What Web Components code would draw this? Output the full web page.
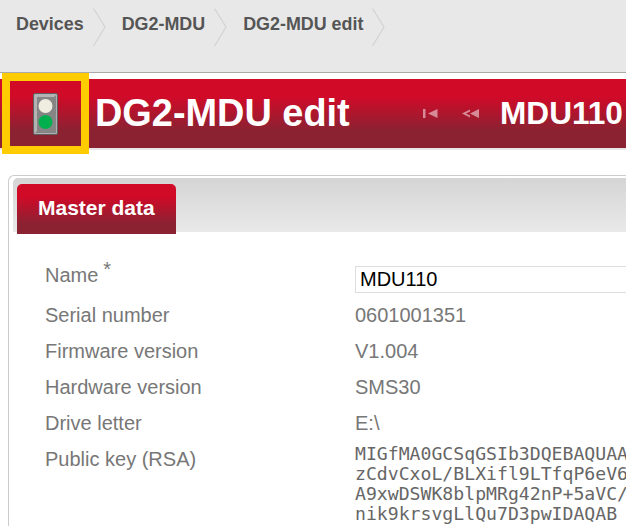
<!DOCTYPE html>
<html>
<head>
<meta charset="utf-8">
<title>DG2-MDU edit</title>
<style>
    html, body { margin: 0; height: 526px; overflow: hidden; background: #fff; font-family: "Liberation Sans", Arial, sans-serif; }
</style>
</head>
<body>
<app-breadcrumb>
    <crumb-item>Devices</crumb-item>
    <crumb-item>DG2-MDU</crumb-item>
    <crumb-item>DG2-MDU edit</crumb-item>
</app-breadcrumb>
<page-banner heading="DG2-MDU edit" device="MDU110"></page-banner>
<tab-panel label="Master data">
    <form-row label="Name" required><name-input value="MDU110"></name-input></form-row>
    <form-row label="Serial number">0601001351</form-row>
    <form-row label="Firmware version">V1.004</form-row>
    <form-row label="Hardware version">SMS30</form-row>
    <form-row label="Drive letter">E:\</form-row>
    <form-row label="Public key (RSA)"><key-block>MIGfMA0GCSqGSIb3DQEBAQUAA
zCdvCxoL/BLXifl9LTfqP6eV6
A9xwDSWK8blpMRg42nP+5aVC/
nik9krsvgLlQu7D3pwIDAQAB</key-block></form-row>
</tab-panel>

<script>
class AppBreadcrumb extends HTMLElement {
    constructor () {
        super()
        this.attachShadow({mode: "open"}).innerHTML = `
        <style>
            :host { display: flex; height: 72px; padding-left: 16px; box-sizing: content-box;
                    background: #e8e8e8; border-bottom: 1px solid #aaa; }
        </style>
        <slot></slot>`
    }
}

class CrumbItem extends HTMLElement {
    constructor () {
        super()
        this.attachShadow({mode: "open"}).innerHTML = `
        <style>
            :host { display: flex; height: 48px; align-items: flex-start; font-size: 17.9px; font-weight: bold;
                    color: #555; white-space: nowrap; }
            span { padding-top: 14px; line-height: 20px; }
            svg { margin: 8px 16px 0 9px; flex: none; }
        </style>
        <span><slot></slot></span>
        <svg width="13" height="39" viewBox="0 0 13 39"><path d="M0.5 0.5 L12 19 L0.5 38" fill="none" stroke="#d2d2d2" stroke-width="1.2"/></svg>`
    }
}

class PageBanner extends HTMLElement {
    constructor () {
        super()
        this.attachShadow({mode: "open"}).innerHTML = `
        <style>
            :host { display: block; position: relative; margin-top: 6px; height: 69px;
                    border-bottom: 2px solid #e8e8e8; }
            .bar { display: flex; align-items: center; height: 69px; padding-left: 95px; width: 700px;
                   background: linear-gradient(#d10a28 0, #d10a28 25%, #8a2232 75%, #8a2232 100%);
                   color: #fff; font-weight: bold; white-space: nowrap; }
            h1 { margin: 0; font-size: 37.9px; line-height: 69px; width: 328px; flex: none; }
            .nav { flex: none; margin-top: -1px; opacity: .5; }
            .nav + .nav { margin-left: 24px; }
            .device { font-size: 31.6px; margin-left: 20px; margin-top: -1px; }
            .mark { position: absolute; left: 2px; top: -6px; width: 87px; height: 81px; box-sizing: border-box;
                    border: 8px solid #fc0; display: flex; align-items: center; justify-content: center; }
            .mark svg { margin: 0 1px 0 0; }
        </style>
        <div class="bar">
            <h1 id="heading"></h1>
            <svg class="nav" width="15" height="9" viewBox="0 0 15 9"><path d="M0 0h2.5v9H0z M5 4.5 L14.5 0 V9z" fill="#fff"/></svg>
            <svg class="nav" width="18" height="9" viewBox="0 0 18 9"><path d="M0 4.5 L8 0.5 V2.5 L4 4.5 L8 6.5 V8.5z M8 4.5 L17 0 V9z" fill="#fff"/></svg>
            <span class="device" id="device"></span>
        </div>
        <div class="mark">
            <svg width="25" height="42" viewBox="0 0 25 42">
                <rect x="0.5" y="0.5" width="24" height="41" rx="1.5" fill="#b0b0b0" stroke="#5f5f5f"/>
                <path d="M2 2H23V40H2z" fill="#858585"/>
                <path d="M2 2H23L21 4H4V38L2 40z" fill="#b4b4b4"/>
                <circle cx="12.5" cy="13" r="7" fill="#efece0"/>
                <circle cx="12.5" cy="29" r="7" fill="#00b04f"/>
            </svg>
        </div>`
    }

    connectedCallback () {
        this.shadowRoot.getElementById("heading").textContent = this.getAttribute("heading")
        this.shadowRoot.getElementById("device").textContent = this.getAttribute("device")
    }
}

class TabPanel extends HTMLElement {
    constructor () {
        super()
        this.attachShadow({mode: "open"}).innerHTML = `
        <style>
            :host { display: block; margin: 25px 0 0 8px; width: 640px; height: 360px; box-sizing: border-box;
                    border: 1px solid #ccc; border-right: 0; border-bottom: 0; border-radius: 6px 0 0 0; padding: 2px 0 0 4px; }
            .strip { height: 54px; padding-left: 4px; border-radius: 5px 0 0 0; position: relative;
                     background: linear-gradient(#d5d5d5, #e9e9e9); }
            .tab { position: relative; top: 6px; width: 159px; height: 50px; box-sizing: border-box; padding-left: 21px;
                   border-radius: 5px 5px 0 0; color: #fff; font-size: 21px; font-weight: bold; line-height: 48px;
                   background: linear-gradient(#d10a28 0, #d10a28 25%, #8a2232 80%, #8a2232 100%); }
            .body { padding: 31px 0 0 32px; }
        </style>
        <div class="strip"><div class="tab" id="label"></div></div>
        <div class="body"><slot></slot></div>`
    }

    connectedCallback () {
        this.shadowRoot.getElementById("label").textContent = this.getAttribute("label")
    }
}

class FormRow extends HTMLElement {
    constructor () {
        super()
        this.attachShadow({mode: "open"}).innerHTML = `
        <style>
            :host { display: grid; grid-template-columns: 310px 1fr; min-height: 36px; font-size: 20px;
                    line-height: 24px; color: #777; white-space: nowrap; }
            sup { font-size: 20px; line-height: 0; margin-left: 5px; vertical-align: 6px; }
        </style>
        <div><span id="label"></span><sup id="req" hidden>*</sup></div>
        <div><slot></slot></div>`
    }

    connectedCallback () {
        this.shadowRoot.getElementById("label").textContent = this.getAttribute("label")
        this.shadowRoot.getElementById("req").hidden = !this.hasAttribute("required")
    }
}

class NameInput extends HTMLElement {
    constructor () {
        super()
        this.attachShadow({mode: "open"}).innerHTML = `
        <style>
            :host { display: block; margin: 3px 0 10px; }
            input { display: block; width: 100%; height: 27px; box-sizing: border-box; margin: 0; padding: 0 4px; outline: 0;
                    border: 1px solid #ddd; color: #000; background: #fff; font: 20px "Liberation Sans", Arial, sans-serif; }
        </style>
        <input id="field">`
    }

    connectedCallback () {
        this.shadowRoot.getElementById("field").value = this.getAttribute("value")
    }
}

class KeyBlock extends HTMLElement {
    constructor () {
        super()
        this.attachShadow({mode: "open"}).innerHTML = `
        <style>
            :host { display: block; margin-top: -3px; }
            div { white-space: pre; font: 18.15px/20px "DejaVu Sans Mono", monospace; color: #666; }
        </style>
        <div><slot></slot></div>`
    }
}

customElements.define("app-breadcrumb", AppBreadcrumb)
customElements.define("crumb-item", CrumbItem)
customElements.define("page-banner", PageBanner)
customElements.define("tab-panel", TabPanel)
customElements.define("form-row", FormRow)
customElements.define("name-input", NameInput)
customElements.define("key-block", KeyBlock)
</script>
</body>
</html>
